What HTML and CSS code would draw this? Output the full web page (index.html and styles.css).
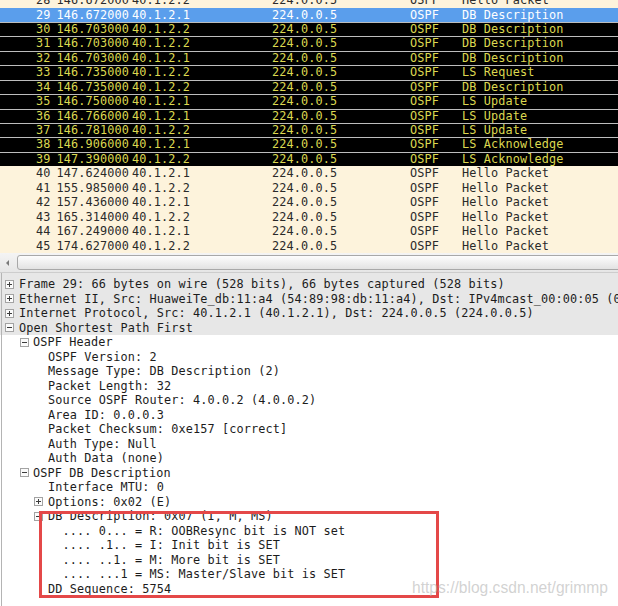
FILE: index.html
```html
<!DOCTYPE html>
<html>
<head>
<meta charset="utf-8">
<link rel="stylesheet" href="styles.css">
</head>
<body>
<div class="app">
  <div class="plist">
    <div class="plist-inner">
      <div class="pr cream"><span class="c-no">28</span><span class="c-time">146.672000</span><span class="c-src">40.1.2.2</span><span class="c-dst">224.0.0.5</span><span class="c-pro">OSPF</span><span class="c-info">Hello Packet</span></div>
      <div class="pr sel"><span class="c-no">29</span><span class="c-time">146.672000</span><span class="c-src">40.1.2.1</span><span class="c-dst">224.0.0.5</span><span class="c-pro">OSPF</span><span class="c-info">DB Description</span></div>
      <div class="pr blk"><span class="c-no">30</span><span class="c-time">146.703000</span><span class="c-src">40.1.2.2</span><span class="c-dst">224.0.0.5</span><span class="c-pro">OSPF</span><span class="c-info">DB Description</span></div>
      <div class="pr blk"><span class="c-no">31</span><span class="c-time">146.703000</span><span class="c-src">40.1.2.2</span><span class="c-dst">224.0.0.5</span><span class="c-pro">OSPF</span><span class="c-info">DB Description</span></div>
      <div class="pr blk"><span class="c-no">32</span><span class="c-time">146.703000</span><span class="c-src">40.1.2.1</span><span class="c-dst">224.0.0.5</span><span class="c-pro">OSPF</span><span class="c-info">DB Description</span></div>
      <div class="pr blk"><span class="c-no">33</span><span class="c-time">146.735000</span><span class="c-src">40.1.2.2</span><span class="c-dst">224.0.0.5</span><span class="c-pro">OSPF</span><span class="c-info">LS Request</span></div>
      <div class="pr blk"><span class="c-no">34</span><span class="c-time">146.735000</span><span class="c-src">40.1.2.2</span><span class="c-dst">224.0.0.5</span><span class="c-pro">OSPF</span><span class="c-info">DB Description</span></div>
      <div class="pr blk"><span class="c-no">35</span><span class="c-time">146.750000</span><span class="c-src">40.1.2.1</span><span class="c-dst">224.0.0.5</span><span class="c-pro">OSPF</span><span class="c-info">LS Update</span></div>
      <div class="pr blk"><span class="c-no">36</span><span class="c-time">146.766000</span><span class="c-src">40.1.2.1</span><span class="c-dst">224.0.0.5</span><span class="c-pro">OSPF</span><span class="c-info">LS Update</span></div>
      <div class="pr blk"><span class="c-no">37</span><span class="c-time">146.781000</span><span class="c-src">40.1.2.2</span><span class="c-dst">224.0.0.5</span><span class="c-pro">OSPF</span><span class="c-info">LS Update</span></div>
      <div class="pr blk"><span class="c-no">38</span><span class="c-time">146.906000</span><span class="c-src">40.1.2.1</span><span class="c-dst">224.0.0.5</span><span class="c-pro">OSPF</span><span class="c-info">LS Acknowledge</span></div>
      <div class="pr blk"><span class="c-no">39</span><span class="c-time">147.390000</span><span class="c-src">40.1.2.2</span><span class="c-dst">224.0.0.5</span><span class="c-pro">OSPF</span><span class="c-info">LS Acknowledge</span></div>
      <div class="pr cream"><span class="c-no">40</span><span class="c-time">147.624000</span><span class="c-src">40.1.2.1</span><span class="c-dst">224.0.0.5</span><span class="c-pro">OSPF</span><span class="c-info">Hello Packet</span></div>
      <div class="pr cream"><span class="c-no">41</span><span class="c-time">155.985000</span><span class="c-src">40.1.2.2</span><span class="c-dst">224.0.0.5</span><span class="c-pro">OSPF</span><span class="c-info">Hello Packet</span></div>
      <div class="pr cream"><span class="c-no">42</span><span class="c-time">157.436000</span><span class="c-src">40.1.2.1</span><span class="c-dst">224.0.0.5</span><span class="c-pro">OSPF</span><span class="c-info">Hello Packet</span></div>
      <div class="pr cream"><span class="c-no">43</span><span class="c-time">165.314000</span><span class="c-src">40.1.2.2</span><span class="c-dst">224.0.0.5</span><span class="c-pro">OSPF</span><span class="c-info">Hello Packet</span></div>
      <div class="pr cream"><span class="c-no">44</span><span class="c-time">167.249000</span><span class="c-src">40.1.2.1</span><span class="c-dst">224.0.0.5</span><span class="c-pro">OSPF</span><span class="c-info">Hello Packet</span></div>
      <div class="pr cream"><span class="c-no">45</span><span class="c-time">174.627000</span><span class="c-src">40.1.2.2</span><span class="c-dst">224.0.0.5</span><span class="c-pro">OSPF</span><span class="c-info">Hello Packet</span></div>
    </div>
  </div>

  <div class="hscroll">
    <span class="arrow"></span>
    <span class="thumb"></span>
  </div>

  <div class="tree">
    <div class="top-group">
      <div class="tr l0"><svg class="exp" viewBox="0 0 9 9" width="9" height="9"><rect x="0.5" y="0.5" width="8" height="8" fill="#fbfbfb" stroke="#a3a3a3"/><path d="M2 4.5h5M4.5 2v5" stroke="#3c3c3c"/></svg><span>Frame 29: 66 bytes on wire (528 bits), 66 bytes captured (528 bits)</span></div>
      <div class="tr l0"><svg class="exp" viewBox="0 0 9 9" width="9" height="9"><rect x="0.5" y="0.5" width="8" height="8" fill="#fbfbfb" stroke="#a3a3a3"/><path d="M2 4.5h5M4.5 2v5" stroke="#3c3c3c"/></svg><span>Ethernet II, Src: HuaweiTe_db:11:a4 (54:89:98:db:11:a4), Dst: IPv4mcast_00:00:05 (01:00:5e:00:00:05)</span></div>
      <div class="tr l0"><svg class="exp" viewBox="0 0 9 9" width="9" height="9"><rect x="0.5" y="0.5" width="8" height="8" fill="#fbfbfb" stroke="#a3a3a3"/><path d="M2 4.5h5M4.5 2v5" stroke="#3c3c3c"/></svg><span>Internet Protocol, Src: 40.1.2.1 (40.1.2.1), Dst: 224.0.0.5 (224.0.0.5)</span></div>
      <div class="tr l0"><svg class="exp" viewBox="0 0 9 9" width="9" height="9"><rect x="0.5" y="0.5" width="8" height="8" fill="#fbfbfb" stroke="#a3a3a3"/><path d="M2 4.5h5" stroke="#3c3c3c"/></svg><span>Open Shortest Path First</span></div>
    </div>
    <div class="tr l1"><svg class="exp" viewBox="0 0 9 9" width="9" height="9"><rect x="0.5" y="0.5" width="8" height="8" fill="#fbfbfb" stroke="#a3a3a3"/><path d="M2 4.5h5" stroke="#3c3c3c"/></svg><span>OSPF Header</span></div>
    <div class="tr l2"><span>OSPF Version: 2</span></div>
    <div class="tr l2"><span>Message Type: DB Description (2)</span></div>
    <div class="tr l2"><span>Packet Length: 32</span></div>
    <div class="tr l2"><span>Source OSPF Router: 4.0.0.2 (4.0.0.2)</span></div>
    <div class="tr l2"><span>Area ID: 0.0.0.3</span></div>
    <div class="tr l2"><span>Packet Checksum: 0xe157 [correct]</span></div>
    <div class="tr l2"><span>Auth Type: Null</span></div>
    <div class="tr l2"><span>Auth Data (none)</span></div>
    <div class="tr l1"><svg class="exp" viewBox="0 0 9 9" width="9" height="9"><rect x="0.5" y="0.5" width="8" height="8" fill="#fbfbfb" stroke="#a3a3a3"/><path d="M2 4.5h5" stroke="#3c3c3c"/></svg><span>OSPF DB Description</span></div>
    <div class="tr l2"><span>Interface MTU: 0</span></div>
    <div class="tr l2e"><svg class="exp" viewBox="0 0 9 9" width="9" height="9"><rect x="0.5" y="0.5" width="8" height="8" fill="#fbfbfb" stroke="#a3a3a3"/><path d="M2 4.5h5M4.5 2v5" stroke="#3c3c3c"/></svg><span>Options: 0x02 (E)</span></div>
    <div class="tr l2e"><svg class="exp" viewBox="0 0 9 9" width="9" height="9"><rect x="0.5" y="0.5" width="8" height="8" fill="#fbfbfb" stroke="#a3a3a3"/><path d="M2 4.5h5" stroke="#3c3c3c"/></svg><span>DB Description: 0x07 (I, M, MS)</span></div>
    <div class="tr l3"><span>.... 0... = R: OOBResync bit is NOT set</span></div>
    <div class="tr l3"><span>.... .1.. = I: Init bit is SET</span></div>
    <div class="tr l3"><span>.... ..1. = M: More bit is SET</span></div>
    <div class="tr l3"><span>.... ...1 = MS: Master/Slave bit is SET</span></div>
    <div class="tr l2"><span>DD Sequence: 5754</span></div>
  </div>

  <div class="redbox"></div>
  <div class="watermark">https://blog.csdn.net/grimmp</div>
</div>
</body>
</html>
```

FILE: styles.css
```css
html, body {
  margin: 0;
  padding: 0;
  background: #ffffff;
}

.app {
  position: relative;
  width: 618px;
  height: 606px;
  overflow: hidden;
  background: #ffffff;
  font-family: "DejaVu Sans Mono", "Liberation Mono", monospace;
  font-size: 11.83px;
  letter-spacing: 0.13px;
}

/* ---------- packet list ---------- */
.plist {
  height: 253px;
  overflow: hidden;
}

.plist-inner {
  margin-top: -6.95px;
}

.pr {
  display: grid;
  grid-template-columns: 50.5px 81.5px 140px 138px 52px 1fr;
  height: 14.44px;
  line-height: 14.44px;
  white-space: nowrap;
  box-sizing: border-box;
}

.pr span {
  overflow: hidden;
}

.c-no {
  text-align: right;
}

.c-time {
  padding-left: 6px;
}

.cream {
  background: #fdf3dc;
  color: #2a2a2a;
}

.sel {
  background: #5a9eec;
  color: #ffffff;
}

.blk {
  background: #000000;
  color: #dcd850;
  border-top: 1px solid #bdbdbd;
  line-height: 13.44px;
}

/* ---------- horizontal scrollbar ---------- */
.hscroll {
  position: relative;
  height: 19px;
  background: linear-gradient(#f4f4f4, #e6e6e6);
  display: flex;
  align-items: center;
}

.arrow {
  width: 0;
  height: 0;
  margin-left: 6px;
  border-top: 3px solid transparent;
  border-bottom: 3px solid transparent;
  border-right: 3px solid #7a7a7a;
}

.thumb {
  margin-left: 8px;
  flex: 1;
  height: 13px;
  margin-right: -6px;
  border: 1px solid #a8a8a8;
  border-radius: 3px;
  background: linear-gradient(#fdfdfd, #e2e2e2);
}

/* ---------- detail tree ---------- */
.tree {
  border-top: 1px solid #cdcdcd;
  color: #1c1c1c;
  position: relative;
}

.tree::before {
  content: "";
  position: absolute;
  left: 1px;
  top: 0;
  bottom: -400px;
  width: 1px;
  background: #b4b4b4;
}

.top-group {
  background: #e7e7e7;
  padding-top: 3.75px;
}

.tr {
  display: flex;
  align-items: center;
  height: 14.5px;
  white-space: nowrap;
  overflow: hidden;
}

.exp {
  flex: none;
  display: block;
}

.l0 {
  padding-left: 5px;
}

.l0 .exp {
  margin-right: 5px;
}

.l1 {
  padding-left: 20px;
}

.l1 .exp {
  margin-right: 4px;
}

.l2 {
  padding-left: 48px;
}

.l2e {
  padding-left: 34px;
}

.l2e .exp {
  margin-right: 5px;
}

.l3 {
  padding-left: 62.5px;
}

/* ---------- overlays ---------- */
.redbox {
  position: absolute;
  left: 39px;
  top: 511px;
  width: 400px;
  height: 87px;
  box-sizing: border-box;
  border: 3px solid #e44848;
}

.watermark {
  position: absolute;
  left: 412px;
  top: 578.6px;
  font-family: "Liberation Sans", Arial, sans-serif;
  font-size: 15.6px;
  letter-spacing: 0;
  line-height: 18px;
  color: rgba(180, 180, 180, 0.6);
  white-space: nowrap;
}
```
